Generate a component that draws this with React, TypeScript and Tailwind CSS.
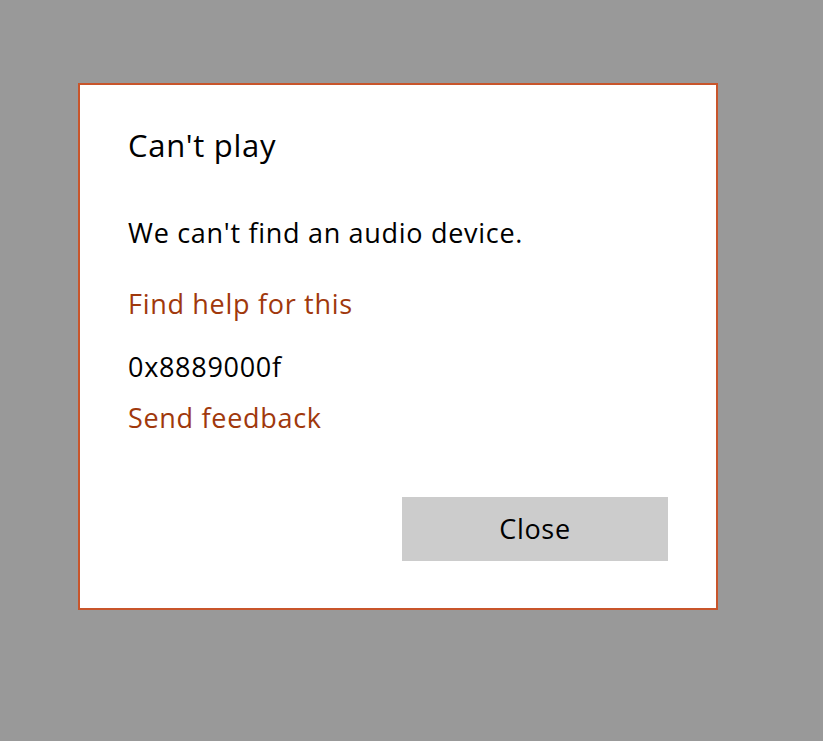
import React from "react";

export default function App() {
  return (
    <div className="w-[823px] h-[741px] bg-[#999999] pt-[83px] pl-[78px]" style={{ fontFamily: '"Open Sans", "Noto Sans", sans-serif' }}>
      <div className="w-[640px] h-[527px] bg-white border-2 border-[#c8552b] flex flex-col pl-[48px] pr-[48px] pt-[40px]">
        <div className="text-[31px] leading-[40px] tracking-[0.7px] text-black">Can't play</div>
        <div className="mt-[50px] text-[27px] leading-[36px] tracking-[0.7px] text-black">We can't find an audio device.</div>
        <div className="mt-[35px] text-[27px] leading-[36px] tracking-[0.7px] text-[#a0380c]">Find help for this</div>
        <div className="mt-[27px] text-[27px] leading-[36px] tracking-[0.7px] text-black">0x8889000f</div>
        <div className="mt-[15px] text-[27px] leading-[36px] tracking-[0.7px] text-[#a0380c]">Send feedback</div>
        <div className="mt-[61px] flex justify-end">
          <button className="w-[266px] h-[64px] bg-[#cccccc] text-[27px] tracking-[0.7px] text-black">Close</button>
        </div>
      </div>
    </div>
  );
}
